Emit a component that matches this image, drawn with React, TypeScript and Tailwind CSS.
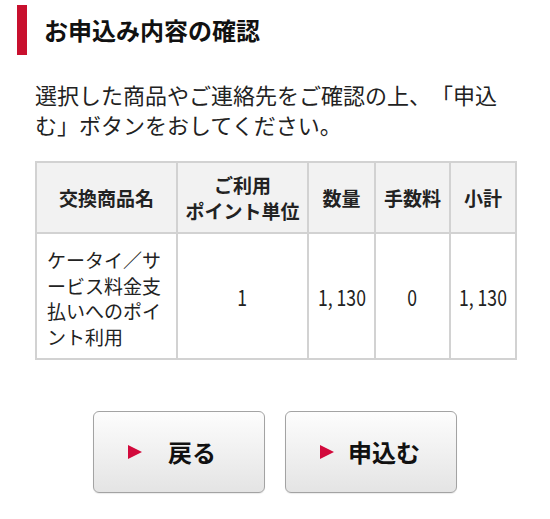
const rows = [
  { name: "ケータイ／サービス料金支払いへのポイント利用", unit: "1", qty: "1, 130", fee: "0", sub: "1, 130" },
];

function ArrowButton({ label }: { label: string }) {
  return (
    <button className="flex items-center w-[172px] h-[82px] pl-[34px] pr-[22px] rounded-[6px] border-[1.5px] border-[#a3a3a3] bg-gradient-to-b from-[#fdfdfd] to-[#e4e4e4] shadow-[0_1px_1px_rgba(0,0,0,0.08)]">
      <span className="w-0 h-0 border-y-[7.5px] border-y-transparent border-l-[14px] border-l-[#d20a3c]" />
      <span className="flex-1 text-center text-[24px] font-bold text-[#111]">{label}</span>
    </button>
  );
}

function Num({ v }: { v: string }) {
  return <span className="inline-block scale-x-[0.8] whitespace-nowrap">{v}</span>;
}

export default function App() {
  return (
    <div className="w-[550px] min-h-[519px] bg-white text-[#222] font-['Noto_Sans_CJK_JP','Noto_Sans',sans-serif]">
      {/* heading */}
      <div className="flex items-center pt-[5px] pl-[17px]">
        <div className="w-[10px] h-[50px] bg-[#c8102e]" />
        <h1 className="ml-[17px] text-[24px] font-bold text-[#111] leading-none">お申込み内容の確認</h1>
      </div>

      <div className="px-[35px]">
        <p className="mt-[24px] text-[22px] leading-[30px] text-[#222] [text-spacing-trim:space-all]">
          選択した商品やご連絡先をご確認の上、「申込む」ボタンをおしてください。
        </p>

        <table className="mt-[22px] w-[480px] table-fixed border-collapse border-2 border-[#d2d2d2]">
          <colgroup>
            <col className="w-[141px]" />
            <col className="w-[131px]" />
            <col className="w-[67px]" />
            <col className="w-[75px]" />
            <col className="w-[66px]" />
          </colgroup>
          <thead>
            <tr className="h-[71px] bg-[#f2f2f2] text-[19px] font-bold leading-[26px] text-[#222]">
              <th className="border-2 border-[#d2d2d2] px-1">交換商品名</th>
              <th className="border-2 border-[#d2d2d2] px-1">
                ご利用
                <br />
                ポイント単位
              </th>
              <th className="border-2 border-[#d2d2d2] px-1">数量</th>
              <th className="border-2 border-[#d2d2d2] px-1">手数料</th>
              <th className="border-2 border-[#d2d2d2] px-1">小計</th>
            </tr>
          </thead>
          <tbody>
            {rows.map((r) => (
              <tr key={r.name} className="h-[125px] text-[#222]">
                <td className="border-2 border-[#d2d2d2] px-[10px] pt-[13px] pb-[9px] text-[19px] leading-[25.5px]">{r.name}</td>
                <td className="border-2 border-[#d2d2d2] text-center text-[22px]"><Num v={r.unit} /></td>
                <td className="border-2 border-[#d2d2d2] text-center text-[22px]"><Num v={r.qty} /></td>
                <td className="border-2 border-[#d2d2d2] text-center text-[22px]"><Num v={r.fee} /></td>
                <td className="border-2 border-[#d2d2d2] text-center text-[22px]"><Num v={r.sub} /></td>
              </tr>
            ))}
          </tbody>
        </table>
      </div>

      <div className="flex justify-center gap-[20px] mt-[51px] pb-[27px]">
        <ArrowButton label="戻る" />
        <ArrowButton label="申込む" />
      </div>
    </div>
  );
}
